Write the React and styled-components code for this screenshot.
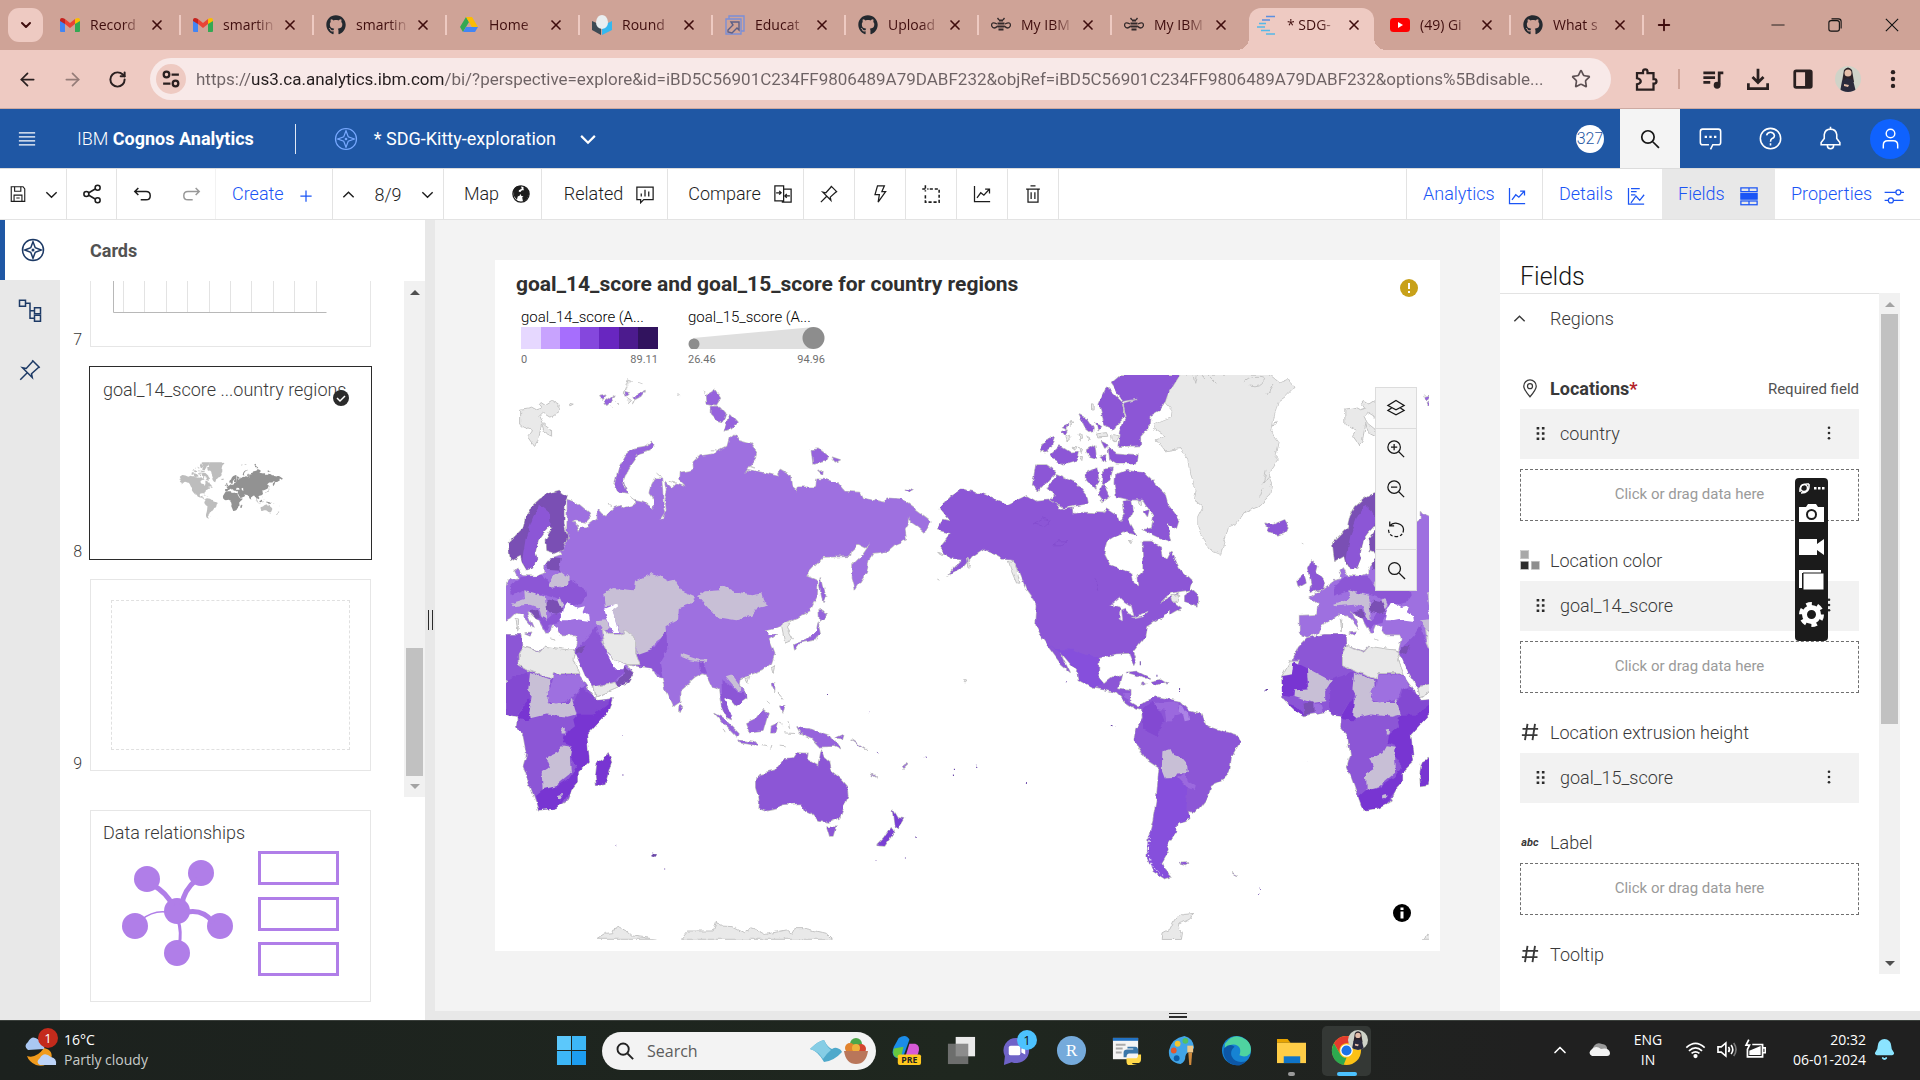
import React from 'react';
import styled, { createGlobalStyle, css } from 'styled-components';
import { FaGithub } from 'react-icons/fa';
import { ArrowLeft, ArrowRight, RotateCw, Star, Plus, X, Bell, ChevronDown, ChevronUp } from 'lucide-react';

const plex = "Roboto, 'Noto Sans', sans-serif";
const segoe = "'Open Sans', 'Noto Sans', sans-serif";

const GlobalStyle = createGlobalStyle`
  *, *::before, *::after { box-sizing: border-box; }
  body { margin: 0; font-family: ${plex}; color: #393939; background: #fff; }
  button, input { font: inherit; color: inherit; border: 0; padding: 0; background: none; }
  svg { display: block; flex: none; }
  h1, h2, h3, p { margin: 0; font-weight: 400; }
`;

/* ---------- shared pieces ---------- */
const Shell = styled.div`
  height: 100vh;
  display: flex;
  flex-direction: column;
  overflow: hidden;
`;
const Center = css`
  display: flex;
  align-items: center;
  justify-content: center;
`;
const Glyph = styled.svg.attrs((p) => ({ viewBox: p.viewBox || '0 0 32 32', 'aria-hidden': true }))`
  width: ${(p) => p.$size || 20}px;
  height: ${(p) => p.$size || 20}px;
  fill: none;
  stroke: currentColor;
  stroke-width: ${(p) => p.$w || 2};
`;

/* ---------- browser frame ---------- */
const TabStrip = styled.div`
  flex: none;
  height: 50px;
  display: flex;
  align-items: stretch;
  background: #cfa397;
  color: #3f0d0d;
  font-family: ${segoe};
`;
const TabSearch = styled.button`
  ${Center}
  width: 35px;
  height: 34px;
  margin: 8px 5px 8px 8px;
  border-radius: 11px;
  background: #eecac2;
`;
const Tab = styled.div`
  position: relative;
  flex: 0 1 133px;
  min-width: 0;
  display: flex;
  align-items: center;
  gap: 10px;
  padding: 0 16px 0 12px;
  &::after {
    content: '';
    position: absolute;
    right: 0;
    top: 15px;
    width: 2px;
    height: 20px;
    background: ${(p) => (p.$plain ? 'transparent' : '#eecac2')};
  }
  ${(p) =>
    p.$active &&
    css`
      &::before {
        content: '';
        position: absolute;
        inset: 8px 4px 0 4px;
        border-radius: 12px 12px 0 0;
        background: #eecac2;
      }
      &::after {
        top: auto;
        bottom: 0;
        left: -8px;
        right: -8px;
        width: auto;
        height: 12px;
        background:
          radial-gradient(circle at 0 0, transparent 12px, #eecac2 12px) left / 12px 12px no-repeat,
          radial-gradient(circle at 100% 0, transparent 12px, #eecac2 12px) right / 12px 12px no-repeat;
      }
    `}
  > * { position: relative; z-index: 1; }
`;
const TabTitle = styled.span`
  flex: 1;
  min-width: 0;
  overflow: hidden;
  white-space: nowrap;
  font-size: 14px;
  line-height: 20px;
  mask-image: linear-gradient(90deg, #000 60%, transparent 100%);
`;
const TabClose = styled.button`
  ${Center}
  width: 16px;
  height: 20px;
  margin-left: -5px;
`;
const NewTab = styled.button`
  ${Center}
  width: 40px;
`;
const WindowButtons = styled.div`
  margin-left: auto;
  display: flex;
  color: #111;
`;
const WindowButton = styled.button`
  ${Center}
  width: 57px;
`;
const AddressRow = styled.div`
  flex: none;
  height: 59px;
  display: flex;
  align-items: center;
  padding: 0 5px;
  background: #eecac2;
  border-bottom: 1px solid #cdaaa2;
  color: #2a2020;
`;
const NavButton = styled.button`
  ${Center}
  width: ${(p) => p.$w || 45}px;
  height: 42px;
  opacity: ${(p) => (p.$off ? 0.45 : 1)};
`;
const AddressBox = styled.label`
  flex: 1;
  min-width: 0;
  height: 42px;
  display: flex;
  align-items: center;
  gap: 10px;
  padding: 0 20px 0 6px;
  margin: 0 12px 0 10px;
  border-radius: 21px;
  background: #f8e9e8;
`;
const SiteInfo = styled.span`
  ${Center}
  width: 30px;
  height: 30px;
  border-radius: 50%;
  background: #eecac2;
`;
const Address = styled.input`
  flex: 1;
  min-width: 0;
  height: 30px;
  font-family: ${plex};
  font-size: 17px;
  color: transparent;
  background: linear-gradient(90deg, #6d6264 0 56px, #231c1d 56px 249px, #6d6264 249px);
  background-clip: text;
  -webkit-background-clip: text;
`;
const Rule = styled.span`
  width: 2px;
  height: 20px;
  margin: 0 10px;
  background: #cfa397;
`;
const Portrait = styled.span`
  width: 26px;
  height: 26px;
  border-radius: 50%;
  overflow: hidden;
`;

/* ---------- application header ---------- */
const Header = styled.header`
  flex: none;
  height: 59px;
  display: flex;
  align-items: center;
  background: #1f57a4;
  color: #fff;
  padding-left: 17px;
`;
const Brand = styled.h1`
  margin: 0 38px 0 40px;
  padding-right: 41px;
  border-right: 1px solid #dfe8f5;
  font-size: 18px;
  line-height: 30px;
  font-weight: 300;
  b { font-weight: 700; }
`;
const DocTitle = styled.span`
  margin: 0 22px 0 16px;
  font-size: 18px;
  line-height: 24px;
`;
const HeaderIcons = styled.div`
  margin-left: auto;
  align-self: stretch;
  display: flex;
`;
const HeaderButton = styled.button`
  ${Center}
  width: 60px;
  ${(p) => p.$light && 'background:#f4f4f4;color:#161616;'}
`;
const Count = styled.span`
  ${Center}
  width: 28px;
  height: 28px;
  border-radius: 50%;
  overflow: hidden;
  background: #fff;
  color: #1f57a4;
  font-size: 16px;
  font-weight: 300;
`;
const User = styled.span`
  ${Center}
  width: 40px;
  height: 40px;
  border-radius: 50%;
  background: #0f62fe;
`;

/* ---------- toolbar ---------- */
const Toolbar = styled.div`
  flex: none;
  height: 52px;
  display: flex;
  border-top: 1px solid #dcdcdc;
  border-bottom: 1px solid #e3e3e3;
  background: #fff;
  font-size: 18px;
`;
const Tool = styled.button`
  display: flex;
  align-items: center;
  justify-content: ${(p) => (p.$spread ? 'space-between' : 'center')};
  gap: 12px;
  width: ${(p) => p.$w}px;
  padding: ${(p) => (p.$spread ? '0 16px' : p.$label ? '0 0 0 10px' : '0')};
  border-right: ${(p) => (p.$open ? 0 : 1)}px solid #e3e3e3;
  color: ${(p) => (p.$blue ? '#1b55f5' : '#1d1d1d')};
  background: ${(p) => (p.$on ? '#e8e8e8' : 'transparent')};
  opacity: ${(p) => (p.$off ? 0.45 : 1)};
  line-height: 24px;
  font-weight: 300;
  svg { margin-top: ${(p) => (p.$blue ? 4 : 0)}px; }
`;
const Pager = styled.div`
  display: flex;
  align-items: center;
  justify-content: center;
  gap: 18px;
  width: 111px;
  border-right: 1px solid #e3e3e3;
  font-weight: 300;
  color: #1d1d1d;
`;
const Push = styled.div`
  margin-left: auto;
  display: flex;
  border-left: 1px solid #e3e3e3;
`;

/* ---------- workspace ---------- */
const Workspace = styled.div`
  flex: 1;
  min-height: 0;
  display: flex;
`;
const Rail = styled.nav`
  flex: none;
  width: 60px;
  background: #e8e8e8;
  color: #1d3a66;
`;
const RailButton = styled.button`
  ${Center}
  width: 60px;
  height: 60px;
  border-left: ${(p) => (p.$on ? 5 : 0)}px solid #1f57a4;
  background: ${(p) => (p.$on ? '#fff' : 'transparent')};
`;
const CardsPanel = styled.aside`
  flex: none;
  width: 365px;
  display: flex;
  flex-direction: column;
  background: #fff;
`;
const CardsTitle = styled.h2`
  padding: 19px 0 18px 30px;
  font-size: 18px;
  line-height: 24px;
  font-weight: 700;
  color: #525252;
`;
const CardsScroll = styled.div`
  flex: 1;
  min-height: 0;
  display: flex;
`;
const CardList = styled.div`
  flex: 1;
  display: flex;
  flex-direction: column;
  justify-content: flex-end;
  gap: 20px;
  overflow: hidden;
  padding-bottom: 26px;
`;
const CardRow = styled.div`
  flex: none;
  display: flex;
  align-items: flex-end;
  gap: 8px;
  height: 192px;
`;
const CardNumber = styled.span`
  width: 22px;
  text-align: right;
  font-size: 16px;
  line-height: 14px;
  font-weight: 300;
`;
const Card = styled.button`
  position: relative;
  display: flex;
  flex-direction: column;
  width: 281px;
  height: 192px;
  padding: ${(p) => p.$pad || '0'};
  border: 1px solid #e6e6e6;
  background: #fff;
  text-align: left;
  ${(p) => p.$on && 'outline:1px solid #2b2b2b;border-color:#fff;'}
`;
const CardName = styled.span`
  padding: 10px 12px 4px;
  font-size: 18px;
  line-height: 24px;
  font-weight: 300;
  white-space: nowrap;
`;
const Tick = styled.span`
  position: absolute;
  top: 22px;
  right: 21px;
`;
const Empty = styled.span`
  flex: 1;
  border: 1px dashed #e0e0e0;
`;
const Mini = styled.span`
  ${Center}
  flex: 1;
  padding-top: 16px;
`;
const RelationWrap = styled.div`
  flex: none;
  padding: 13px 0 18px 30px;
`;
const Track = styled.div`
  flex: none;
  width: 21px;
  display: flex;
  flex-direction: column;
  align-items: center;
  padding: 0 2px;
  background: #f1f1f1;
`;
const Arrow = styled.span`
  ${Center}
  width: 17px;
  height: 21px;
  &::before {
    content: '';
    border: 5px solid transparent;
    ${(p) => (p.$down ? 'border-top-color' : 'border-bottom-color')}: ${(p) => (p.$dim ? '#a3a3a3' : '#505050')};
    margin: ${(p) => (p.$down ? '5px 0 0' : '0 0 4px')};
  }
`;
const Rest = styled.span`
  flex: ${(p) => p.$n} 1 0;
  align-self: stretch;
  background: ${(p) => (p.$thumb ? '#c1c1c1' : 'transparent')};
`;
const Splitter = styled.div`
  ${Center}
  flex: none;
  width: 10px;
  background: #e8e8e8;
  &::before {
    content: '';
    width: 5px;
    height: 20px;
    border: solid #2b2b2b;
    border-width: 0 1px;
  }
`;
const Stage = styled.div`
  flex: 1;
  min-width: 0;
  display: flex;
  flex-direction: column;
`;
const Columns = styled.div`
  flex: 1;
  min-height: 0;
  display: flex;
`;
const BottomBar = styled.div`
  flex: none;
  height: 9px;
  ${Center}
  background: #e8e8e8;
  &::before {
    content: '';
    width: 18px;
    height: 5px;
    border: solid #2b2b2b;
    border-width: 1px 0 2px;
  }
`;
const Canvas = styled.main`
  flex: 1;
  min-width: 0;
  display: flex;
  padding: 40px 60px 60px;
  background: #f3f3f3;
`;
const Viz = styled.section`
  position: relative;
  flex: 1;
  min-width: 0;
  display: flex;
  flex-direction: column;
  padding: 11px 11px 11px;
  background: #fff;
`;
const VizHead = styled.div`
  display: flex;
  align-items: flex-end;
  justify-content: space-between;
  padding: 0 11px 0 10px;
`;
const VizTitle = styled.h2`
  font-size: 21px;
  line-height: 26px;
  font-weight: 700;
  color: #2f2f2f;
`;
const Legends = styled.div`
  display: flex;
  gap: 30px;
  padding: 11px 15px 8px;
`;
const Legend = styled.div`
  width: 137px;
  display: flex;
  flex-direction: column;
`;
const LegendName = styled.span`
  font-size: 15px;
  line-height: 19px;
  font-weight: 300;
  color: #000;
`;
const Ramp = styled.div`
  height: 22px;
  display: grid;
  grid-template-columns: repeat(7, 1fr);
`;
const Swatch = styled.span`
  background: ${(p) => p.$c};
`;
const Ends = styled.div`
  display: flex;
  justify-content: space-between;
  padding-top: 4px;
  font-size: 11px;
  line-height: 14px;
  color: #6f6f6f;
`;
const WorldMap = styled.svg`
  flex: 1 1 0;
  min-height: 0;
  width: 100%;
`;
const MapTools = styled.div`
  position: absolute;
  top: 127px;
  right: 23px;
  width: 42px;
  border: 1px solid #dcdcdc;
  background: #f4f4f4;
`;
const MapTool = styled.button`
  ${Center}
  box-sizing: content-box;
  width: 40px;
  height: 40px;
  color: #161616;
  border-bottom: ${(p) => (p.$line ? 1 : 0)}px solid #dcdcdc;
`;
const InfoButton = styled.button`
  position: absolute;
  right: 29px;
  bottom: 29px;
`;

/* ---------- fields panel ---------- */
const FieldsPanel = styled.aside`
  flex: none;
  width: 420px;
  display: flex;
  flex-direction: column;
  padding: 0 20px 37px 0;
  background: #fff;
`;
const PanelTitle = styled.h2`
  padding: 41px 0 0 20px;
  font-size: 25px;
  line-height: 32px;
  font-weight: 300;
  color: #161616;
`;
const PanelScroll = styled.div`
  flex: 1;
  min-height: 0;
  display: flex;
`;
const PanelBody = styled.div`
  flex: 1;
  min-width: 0;
  overflow: hidden;
  padding: 0 20px;
  border-top: 1px solid #e3e3e3;
  font-size: 18px;
  font-weight: 300;
`;
const Region = styled.button`
  display: flex;
  align-items: center;
  gap: 23px;
  height: 50px;
  margin: 0 0 25px -8px;
  padding-bottom: 2px;
`;
const Slot = styled.section`
  display: flex;
  flex-direction: column;
  gap: 10px;
  margin-bottom: 20px;
`;
const SlotHead = styled.h3`
  display: flex;
  align-items: center;
  gap: 10px;
  height: 40px;
  margin-bottom: -10px;
  padding-bottom: 2px;
  font-size: 18px;
  font-weight: ${(p) => (p.$bold ? 700 : 300)};
  em { font-style: normal; color: #b4232a; }
  small { margin-left: auto; padding-top: 2px; font-size: 15px; font-weight: 400; color: #525252; }
`;
const SlotIcon = styled.span`
  ${Center}
  width: 20px;
`;
const Abc = styled.span`
  font: italic 700 11px ${plex};
`;
const Field = styled.div`
  display: flex;
  align-items: center;
  gap: 12px;
  height: 50px;
  padding: 0 23px 2px 14px;
  background: #f2f2f2;
  button { margin-left: auto; }
`;
const Drop = styled.button`
  width: 100%;
  height: 52px;
  padding-bottom: 2px;
  border: 1px dashed #6f6f6f;
  font-size: 15px;
  font-weight: 400;
  color: #9a9a9a;
`;

/* ---------- screen capture palette ---------- */
const Palette = styled.div`
  position: absolute;
  top: 478px;
  right: 92px;
  z-index: 3;
  width: 33px;
  height: 163px;
  border-radius: 4px;
  background: #1b1b1b;
  color: #fff;
`;

/* ---------- taskbar ---------- */
const Taskbar = styled.footer`
  flex: none;
  height: 60px;
  display: grid;
  grid-template-columns: 1fr auto 1fr;
  align-items: center;
  border-top: 1px solid #3a3f3b;
  background: linear-gradient(90deg, #1c211e, #1f271f 50%, #202020 80%);
  color: #fff;
  font-family: ${segoe};
  font-size: 14px;
  line-height: 20px;
`;
const Weather = styled.div`
  display: flex;
  align-items: center;
  gap: 6px;
  padding: 0 0 2px 24px;
  p + p { color: #c8cbc9; }
`;
const Dock = styled.div`
  display: flex;
  align-items: center;
  gap: 6px;
  padding-right: 2px;
`;
const DockButton = styled.button`
  ${Center}
  position: relative;
  width: 49px;
  height: 50px;
  border-radius: 5px;
  background: ${(p) => (p.$on ? '#343835' : 'transparent')};
  &::after {
    content: '';
    position: absolute;
    bottom: 0;
    width: ${(p) => p.$bar || 0}px;
    height: 4px;
    border-radius: 2px;
    background: ${(p) => (p.$on ? '#4cc2ff' : '#9a9a9a')};
  }
`;
const DockSearch = styled.label`
  display: flex;
  align-items: center;
  gap: 12px;
  width: 274px;
  height: 38px;
  padding: 0 6px 0 13px;
  border-radius: 19px;
  background: #f3f3f3;
  color: #222;
  input { flex: 1; min-width: 0; font-size: 16px; }
  input::placeholder { color: #5c5c5c; opacity: 1; }
`;
const Tray = styled.div`
  justify-self: end;
  display: flex;
  align-items: center;
  padding: 0 24px 2px 0;
`;
const TrayItem = styled.span`
  ${Center}
  width: ${(p) => p.$w}px;
  text-align: center;
`;
const Clock = styled.time`
  width: 92px;
  text-align: right;
  margin-right: 7px;
  white-space: nowrap;
`;

/* ---------- drawings: browser ---------- */
const Gmail = () => (
  <Glyph viewBox="0 0 20 20" $size={20}>
    <g stroke="none">
      <path fill="#4285f4" d="M0 5v11q0 1 1 1h4V8z" />
      <path fill="#34a853" d="M15 17h4q1 0 1-1V5l-5 3z" />
      <path fill="#fbbc04" d="M15 4v5l5-3V4.500q-1-2.500-5-.5z" />
      <path fill="#c5221f" d="M5 4v5L0 6V4.500Q1 2 5 4z" />
      <path fill="#ea4335" d="M5 4l5 4 5-4v5l-5 4-5-4z" />
    </g>
  </Glyph>
);
const Drive = () => (
  <Glyph viewBox="0 0 20 20" $size={20}>
    <g stroke="none">
      <path fill="#34a853" d="M7 2l3 5-6 10-3-5z" />
      <path fill="#fbbc04" d="M7 2h6l6 10h-6z" />
      <path fill="#4285f4" d="M4 17l3-5h12l-3 5z" />
    </g>
  </Glyph>
);
const Round = () => (
  <Glyph viewBox="0 0 20 20" $size={20}>
    <g stroke="none">
      <path fill="#3d4a54" d="M0 6l9 4v10l-9-5z" />
      <path fill="#35b8ef" d="M20 6l-10 5v9l10-5z" />
      <path fill="#e9eef0" d="M10 0q5 0 6 7 0 6-6 7-6-1-6-7 1-7 6-7z" />
    </g>
  </Glyph>
);
const Edu = () => (
  <Glyph viewBox="0 0 20 20" $size={20} $w={1.4}>
    <path stroke="#7b8fd8" d="M4 4V1h15v15h-3M1 19h15V4H1z" />
    <path stroke="#5c5f86" d="M6 7h8v8l-2-2-5 5-4-1v-2l5-5z" />
  </Glyph>
);
const Bee = () => (
  <Glyph viewBox="0 0 20 20" $size={20} $w={1.3}>
    <g stroke="#33292a">
      <path d="M6 9Q0 6 0.700 11q2 4 6 0M14 9q6-3 5.300 2-2 4-6 0M8 5L6.500 3M12 5l1.500-2" />
      <path strokeWidth="2" d="M8 5.500h4M6.500 8.500h7M6.500 11.500h7M7.500 14.500h5" />
    </g>
  </Glyph>
);
const Cognos = () => (
  <Glyph viewBox="0 0 20 20" $size={20} $w={1.6}>
    <path stroke="#5b8fe0" d="M9 1.500h9M5 5h8" />
    <path stroke="#55b8e8" d="M2 8.500h7M0 12h8M4 15.500h9M9 19h9" />
  </Glyph>
);
const YouTube = () => (
  <Glyph viewBox="0 0 20 20" $size={20}>
    <rect x="0" y="3" width="20" height="14" rx="3.500" fill="#f00" stroke="none" />
    <path d="M8 7l5 3-5 3z" fill="#fff" stroke="none" />
  </Glyph>
);
const Hub = () => <FaGithub size={20} color="#24292f" />;
const Face = () => (
  <Glyph viewBox="0 0 26 26" $size={26}>
    <g stroke="none">
      <rect width="26" height="26" fill="#cfd3c8" />
      <path fill="#2b2227" d="M9 4q4-5 8 0l2 12H7z" />
      <circle cx="13" cy="7" r="3.500" fill="#e5bfa9" />
      <path fill="#2a2a3c" d="M5 26l2-11 5-3 6 2 3 12z" />
      <path fill="#e5bfa9" d="M9 18l5 1-1 2-4-1z" />
    </g>
  </Glyph>
);

const tabs = [
  [Gmail, 'Record'],
  [Gmail, 'smartin'],
  [Hub, 'smartin'],
  [Drive, 'Home'],
  [Round, 'Round'],
  [Edu, 'Educat'],
  [Hub, 'Upload'],
  [Bee, 'My IBM'],
  [Bee, 'My IBM', 'plain'],
  [Cognos, '* SDG-', 'active'],
  [YouTube, '(49) Gi'],
  [Hub, 'What s'],
];

/* ---------- drawings: application ---------- */
const ICONS = {
  explore: <><circle cx="16" cy="16" r="14" /><path d="M16 5l3 8 8 3-8 3-3 8-3-8-8-3 8-3z" /><circle cx="16" cy="16" r="1" /></>,
  save: <><path d="M4 3h21l3 4v22H4z" /><path d="M10 3v8h11V3M9 29V18h14v11M13 23h6" /></>,
  share: <><circle cx="25" cy="6" r="4" /><circle cx="7" cy="16" r="4" /><circle cx="25" cy="26" r="4" /><path d="M11 14l10-6M11 18l10 6" /></>,
  undo: <path d="M9 5l-6 6 6 6M3 11h19q7 0 7 7t-7 7h-9" />,
  redo: <path d="M23 5l6 6-6 6M29 11H10q-7 0-7 7t7 7h8" />,
  plus: <path d="M16 7v18M7 16h18" />,
  globe: <><circle cx="16" cy="16" r="13" /><path fill="currentColor" d="M5 9q4-6 10-5l1 3-4 2-1 3 3 2-1 4-3 1-1 4-4-5zM21 5q7 4 7 11l-3 7-5 4-1-5 2-3-4-1-2-4 3-3 4 0-1-3z" /></>,
  related: <><path d="M3 5h26v20H14l-5 5v-5H3z" /><path d="M10 20v-5M16 20V9M22 20v-8" /></>,
  compare: <><path d="M3 3h14v24H3zM17 8h12v21H15v-2" /><path d="M5 14h8M10 11l3 3-3 3M27 19h-8M22 16l-3 3 3 3" /></>,
  pin: <path d="M19 3l10 10M20 4l-9 10-5-1 13 13-1-5 10-9M12 20L3 29" />,
  bolt: <path d="M12 3h11l-4 9h6L13 29l2-12H8z" />,
  crop: <path strokeWidth="2.500" strokeDasharray="5 3" d="M14 8h15v21H7V16M7 2v10M2 8h10" />,
  chart: <path d="M4 3v25h25M8 22l6-8 5 4 9-10M21 8h7v7" />,
  trash: <path d="M5 8h22M8 8v21h16V8M12 3h8M13 13v11M19 13v11" />,
  details: <path d="M4 3v26h25M8 4h14M8 9h9M8 14h7M8 27l8-11 6 7 7-9" />,
  fields: <><rect x="3" y="3" width="26" height="6" /><rect x="3" y="12" width="26" height="9" fill="currentColor" /><rect x="3" y="24" width="26" height="6" /><path d="M16 3v6M16 24v6" /></>,
  props: <><path d="M1 10h18M27 10h5M1 23h6M15 23h16" /><circle cx="23" cy="10" r="4" /><circle cx="11" cy="23" r="4" /></>,
  search: <><circle cx="13" cy="13" r="9" /><path d="M20 20l9 9" /></>,
  zoomIn: <><circle cx="13" cy="13" r="10" /><path d="M20 20l9 9M8 13h10M13 8v10" /></>,
  zoomOut: <><circle cx="13" cy="13" r="10" /><path d="M20 20l9 9M8 13h10" /></>,
  layers: <><path d="M16 4l13 8-13 7-13-7z" /><path d="M9 16l-6 4 13 7 13-7-6-4" /></>,
  reset: <><path d="M6 4v7h7M6 11q5-6 12-4 9 2 10 9" /><path strokeDasharray="5 3" d="M28 16q0 12-12 12T4 16" /></>,
  chat: <><path d="M16 30l3-6h7q3 0 3-3V7q0-3-3-3H6Q3 4 3 7v14q0 3 3 3h8" /><path strokeWidth="3" strokeDasharray="3 3" d="M8.500 14h15" /></>,
  help: <><circle cx="16" cy="16" r="13" /><path d="M11 12q1-4 5-4t5 4q0 3-3 4-2 1-2 4M16 22v3" /></>,
  bell: <path d="M4 24v-3l4-5v-5q1-7 8-7t8 7v5l4 5v3zM16 1v3M12 25q0 4 4 4t4-4" />,
  user: <><circle cx="16" cy="9" r="6" /><path d="M6 30v-5q0-6 6-6h8q6 0 6 6v5" /></>,
  tree: <><rect x="2" y="3" width="8" height="8" /><rect x="22" y="13" width="8" height="8" /><rect x="22" y="23" width="8" height="8" /><path d="M10 7h6v20h6M16 17h6" /></>,
  up: <path d="M5 22l11-11 11 11" />,
  down: <path d="M5 11l11 11 11-11" />,
  place: <><path d="M16 30q-10-12-10-17a10 10 0 0 1 20 0q0 5-10 17z" /><circle cx="16" cy="13" r="4" /></>,
  hash: <path strokeWidth="3" d="M12 3L8 29M24 3l-4 26M4 11h25M3 21h25" />,
  swatches: <g stroke="#c6c6c6" strokeWidth="1"><rect x="1" y="1" width="13" height="13" fill="#a8a8a8" /><rect x="1" y="18" width="13" height="13" fill="#2b2b2b" /><rect x="18" y="18" width="13" height="13" fill="#8d8d8d" /></g>,
};
const Icon = ({ name, size, w }) => <Glyph $size={size} $w={w}>{ICONS[name]}</Glyph>;

/* ---------- drawings: world map, in thirds of a pixel ---------- */
const LAND = {
  eurasia:
    'M232 750L262 760 298 790 302 805 290 817 248 812 262 830 268 850 275 835 292 835 295 825 322 805 322 780 335 795 345 800 370 775 392 768 400 775 435 765 435 750 460 755 490 778 492 750 478 730 482 710 495 685 515 685 518 720 520 770 526 790 512 810 522 808 530 780 524 745 530 720 525 695 545 715 560 700 590 710 570 690 572 668 612 660 610 640 632 618 670 612 715 590 722 565 738 552 745 572 785 583 800 605 797 625 762 673 780 660 835 672 865 680 875 662 905 680 908 710 918 728 925 712 978 712 982 688 1010 690 1045 700 1065 725 1110 728 1118 745 1188 758 1192 745 1235 748 1325 815 1305 848 1285 830 1258 812 1255 800 1255 825 1246 840 1250 870 1215 885 1192 905 1150 910 1140 925 1130 965 1097 1018 1088 985 1090 945 1120 915 1145 878 1125 895 1105 885 1085 905 1082 920 1000 922 950 975 985 990 982 1040 960 1085 905 1112 875 1125 850 1135 828 1140 840 1155 860 1155 840 1170 855 1210 845 1240 820 1260 770 1278 750 1290 748 1305 765 1320 768 1348 740 1368 725 1350 705 1340 702 1355 715 1385 728 1410 712 1402 698 1370 690 1320 680 1315 668 1312 650 1275 640 1272 615 1285 570 1325 570 1355 548 1370 525 1320 518 1285 505 1282 485 1255 445 1250 410 1245 405 1240 430 1270 415 1295 385 1312 318 1342 312 1315 285 1275 258 1210 255 1200 262 1168 258 1158 215 1158 202 1140 185 1125 175 1150 168 1150 148 1115 110 1080 133 1135 98 1095 78 1090 63 1105 23 1125 13 1150 -22 1162 -44 1150 -44 1098 8 1095 11 1065 -12 1045 53 1000 60 990 85 985 75 965 85 955 95 978 140 980 165 970 165 950 185 925 215 915 208 905 230 880 232 800Z',
  scandinavia: 'M55 880L80 855 100 835 108 800 125 770 150 748 180 730 208 722 232 740 222 765 222 820 232 865 218 900 190 912 168 905 166 870 188 835 180 828 160 850 145 870 135 910 140 925 128 955 110 960 98 940 92 918 62 935Z',
  africa:
    'M-22 1165L30 1155 93 1155 95 1190 150 1205 165 1190 200 1202 245 1202 256 1205 250 1228 275 1290 310 1340 322 1353 370 1347 360 1380 325 1415 290 1455 298 1535 262 1570 262 1600 245 1620 230 1655 215 1665 190 1677 147 1682 125 1620 100 1550 110 1515 100 1460 80 1435 82 1400 55 1397 43 1385 -32 1398 -60 1380 -94 1345 -97 1280 -67 1232 -47 1190Z',
  madagascar: 'M355 1510L365 1535 345 1605 320 1608 317 1580 322 1540 340 1530Z',
  britain: 'M-7 930L8 950 4 965 31 1000 26 1018 -12 1028 -8 1010 -12 990 -20 955ZM-52 995L-32 975 -24 1000 -47 1013Z',
  islands:
    'M373 710L385 660 410 615 435 595 465 590 485 575 492 585 480 600 445 610 415 655 400 695 412 730 385 725ZM650 435L675 420 692 445 680 465 652 460ZM665 470L690 470 708 490 700 515 680 510 665 495ZM720 495L742 520 725 537 703 543ZM965 600L985 598 1015 620 1010 630 970 640ZM1028 622L1052 630 1040 636ZM985 665L1000 662 998 675ZM1250 718L1270 722 1260 727ZM330 440L348 436 338 450ZM340 458L372 435 360 455 348 466ZM430 440L466 425 455 440 436 450ZM405 425L420 430 410 438ZM995 985L1008 1040 1000 1055 990 1010ZM988 1080L1015 1095 990 1115ZM985 1120L992 1150 980 1170 930 1180 915 1202 912 1185 955 1170 980 1145ZM676 1392L700 1405 745 1450 740 1462 700 1420ZM748 1472L800 1480 802 1487 750 1480ZM768 1420L800 1405 820 1380 835 1392 820 1445 780 1450ZM845 1430L866 1420 858 1450 843 1450ZM922 1435L960 1438 1025 1460 1050 1500 1030 1490 990 1492 965 1465 930 1450ZM845 1305L855 1300 855 1325ZM870 1370L885 1368 880 1390ZM568 1365L578 1375 574 1385 567 1380ZM1040 1465L1062 1455 1058 1468ZM1085 1470L1130 1500 1108 1488ZM1145 1570L1163 1585 1152 1578ZM1236 1550L1255 1542 1240 1556ZM105 1150L125 1148 120 1156Z',
  australia:
    'M798 1585L815 1575 855 1565 885 1528 910 1525 920 1510 955 1512 952 1530 985 1550 995 1502 1003 1525 1020 1540 1025 1565 1055 1590 1072 1610 1075 1640 1050 1705 1020 1718 985 1712 965 1690 948 1682 935 1662 875 1665 860 1678 825 1685 808 1678 810 1655 798 1615ZM1012 1733L1038 1733 1030 1760 1020 1760Z',
  zealand: 'M1208 1682L1222 1705 1245 1708 1225 1740 1215 1735ZM1205 1735L1212 1750 1185 1790 1162 1788 1185 1765Z',
  america:
    'M95 388L165 405 232 435 290 408 320 425 370 420 390 450 430 445 432 462 465 458 520 460 530 445 560 465 570 490 585 460 580 425 605 420 610 450 595 480 620 525 580 515 530 545 522 580 540 615 605 640 612 670 628 680 625 650 640 635 638 545 665 545 695 565 700 590 712 600 725 575 750 630 788 665 780 690 720 700 690 730 745 700 735 730 755 745 720 765 720 752 690 775 650 800 645 830 610 875 620 905 615 917 600 880 560 882 508 895 505 945 525 970 545 955 575 945 565 985 600 990 600 1025 625 1040 655 1022 680 1012 750 1025 780 1055 815 1062 830 1098 880 1115 920 1125 932 1145 905 1190 900 1230 885 1258 845 1275 835 1310 800 1355 775 1352 780 1380 745 1392 740 1415 712 1455 718 1470 695 1510 700 1525 725 1552 705 1558 670 1535 652 1490 655 1440 670 1380 680 1320 688 1225 650 1200 613 1140 618 1105 638 1075 635 1048 615 1045 585 1025 560 1000 525 990 490 985 448 962 445 940 388 872 418 935 395 915 340 840 318 795 322 735 290 690 270 640 245 600 225 598 195 582 155 568 130 585 100 620 55 645 95 600 62 595 30 560 62 520 20 510 38 482 62 487 28 445 60 410Z',
  arctic:
    'M380 345L440 370 470 405 475 430 400 445 360 420 375 405 355 385ZM318 315L350 315 378 335 345 370 325 392 308 375ZM555 345L590 332 640 338 705 400 715 435 748 480 740 505 712 488 725 545 695 535 640 510 665 505 672 470 640 420 600 420 560 410 553 370ZM542 70L570 45 748 45 735 90 690 150 660 168 658 200 632 230 632 260 565 262 570 210 590 170 578 122ZM530 82L575 125 585 170 550 207 525 195 508 130ZM535 262L560 280 625 285 620 312 560 312 540 300ZM515 245L535 255 525 265ZM448 165L470 175 490 205 488 218 465 200ZM498 190L515 200 505 212ZM330 272L350 240 373 230 365 260 345 275ZM362 285L390 258 425 280 445 278 440 300 400 312 370 298ZM470 270L495 255 500 298 480 292ZM470 340L500 325 508 360 495 390 470 360ZM520 325L550 322 540 360 515 375ZM520 375L540 410 520 425 505 405ZM398 200L418 190 410 205ZM395 215L415 208 405 228ZM510 290L528 285 525 305ZM640 455L655 450 650 470ZM765 705L785 690 805 708 805 738 765 725Z',
  iceland: 'M1003 490L1030 495 1065 480 1078 502 1070 515 1045 525 1015 518 1020 505Z',
  antilles: 'M590 938L620 935 660 955 640 955 615 945ZM665 965L690 960 702 968 680 975ZM635 970L648 972 640 976ZM708 968L720 970 712 973ZM750 1512L774 1510 768 1518ZM908 1540L925 1548 915 1545Z',
  greenland:
    'M752 45L1020 45 1050 70 1075 60 1092 82 1065 110 1045 125 1030 180 1025 220 1045 245 1035 290 1045 300 1015 345 1025 370 1020 405 985 440 945 455 920 490 895 500 885 540 872 583 845 572 820 535 805 500 805 470 820 440 795 420 800 390 785 350 778 300 750 265 705 272 680 240 710 230 672 205 675 190 725 170 728 150 708 125 715 105Z',
};

const OldWorld = () => (
  <g id="old-world">
    <g stroke="#c0c0c0" strokeWidth="4" strokeLinejoin="round" paintOrder="stroke">
      <path fill="#9e6fe0" d={LAND.eurasia} />
      <path fill="#7a4fb4" d={LAND.scandinavia} />
      <path fill="#8c57d6" d={LAND.africa} />
      <path fill="#7836d2" d={LAND.madagascar} />
      <path fill="#8c57d6" d={LAND.britain} />
      <path fill="#9664dc" d={LAND.islands} />
      <path fill="#8c57d6" d={LAND.australia} />
      <path fill="#7a3fd4" d={LAND.zealand} />
    </g>
    <g fill="#e9e9e9" stroke="#c4c4c4" strokeWidth="3">
      <path d="M92 478L112 475 125 472 140 480 155 475 145 462 150 455 165 465 185 452 208 465 205 485 180 502 160 490 150 500 160 520 185 540 185 562 165 552 155 520 145 570 134 587 115 560 125 545 108 535 92 520Z" />
      <path d="M875 1125L910 1108 890 1135 908 1168 885 1178 880 1150ZM845 1255L855 1248 850 1272ZM768 1285L780 1280 774 1300ZM78 1110L86 1108 84 1145ZM180 1168L196 1172M236 460L250 463 240 468Z" />
      <path d="M400 430L415 390 428 395M410 445L425 455 412 468M440 440L430 468M380 455L390 465M360 465L372 472M445 398L458 402M560 433L568 440M640 420L648 428M500 670L512 680M540 695L560 700M355 760L362 772M420 740L435 752M660 600L680 600M780 650L795 655" />
      <path d="M810 1488L835 1492M850 1485L845 1500M870 1490L888 1492M885 1450L915 1452M865 1330L880 1350M895 1415L900 1435M870 1418L878 1425M700 1435L706 1448M830 1355L840 1365" />
      <path d="M322 2070L350 2052 366 2050 368 2040 392 2034 412 2045 428 2060 500 2070ZM575 2070L595 2045 670 2045 680 2018 690 2030 730 2032 765 2050 785 2035 800 2040 828 2055 890 2042 905 2055 915 2038 950 2038 1010 2052 1028 2070Z" />
    </g>
    <path fill="#8c57d6" d="M150 765L180 790 182 825 160 850 145 870 135 905 140 925 128 955 110 960 97 930 108 860 130 800Z" />
    <path fill="#8c57d6" d="M60 1010L90 982 160 978 180 1005 215 1015 240 990 285 1020 290 1040 275 1062 225 1072 215 1050 165 1035 100 1025 62 1038ZM130 1085L170 1110 190 1092 215 1090 205 1120 178 1125 168 1145 150 1115Z" />
    <path fill="#7a4fb4" d="M160 1070L178 1050 203 1055 217 1085 200 1092 175 1087ZM170 945L185 922 212 925 208 960 175 958ZM120 1085L145 1080 150 1105 138 1108Z" />
    <path fill="#c8bfd6" d="M178 1002L190 980 212 963 236 982 235 1008 185 1014ZM60 1062L105 1048 103 1022 165 1038 170 1110 155 1102 148 1075 120 1065 65 1070ZM202 1050L212 1046 220 1065 212 1075ZM318 1115L350 1112 360 1135 340 1140Z" />
    <path fill="#c8bfd6" d="M340 1030L370 1015 432 1022 435 995 490 970 535 995 555 990 572 1020 615 1040 605 1062 570 1075 568 1108 527 1130 530 1155 500 1175 490 1200 460 1215 440 1215 437 1165 410 1145 390 1150 375 1110 365 1085 380 1065 345 1070Z" />
    <path fill="#c8bfd6" d="M625 1040L645 1025 690 1022 700 1008 735 1027 785 1037 815 1032 820 1052 838 1065 805 1072 785 1098 740 1112 680 1102 655 1075ZM570 1212L625 1230 650 1230 648 1240 600 1232 570 1220ZM708 1280L725 1275 755 1315 748 1328Z" />
    <path fill="#8c57d6" d="M440 1215L495 1195 530 1140 532 1200 510 1238 518 1285 485 1255 445 1250ZM628 1235L640 1235 652 1272 630 1268ZM695 1290L715 1300 745 1330 768 1330 768 1348 740 1368 725 1350 702 1345 728 1408 712 1402 698 1370Z" />
    <path fill="#8c57d6" d="M262 1195L298 1160 320 1125 330 1165 352 1215 372 1255 402 1245 405 1260 375 1300 312 1312 285 1275 258 1215Z" />
    <path fill="#7a4fb4" d="M403 1250L430 1270 415 1295 383 1312 378 1297 400 1282ZM262 1195L288 1188 275 1212 260 1212Z" />
    <g fill="#e9e9e9" stroke="#c4c4c4" strokeWidth="3">
      <path d="M335 1135L360 1155 390 1155 410 1145 437 1165 437 1210 450 1245 410 1245 375 1232 350 1205 340 1180Z" />
      <path d="M312 1312L375 1298 382 1315 318 1342Z" />
      <path d="M85 1210L97 1190 150 1208 165 1190 245 1202 258 1208 252 1228 270 1272 190 1272 188 1288 120 1265 85 1245ZM-97 1280L-72 1232 -42 1232 -67 1275Z" />
    </g>
    <path fill="#fff" d="M230 1060L218 1080 212 1112 235 1112 255 1108 300 1114 298 1100 278 1088 285 1070 262 1075 245 1065ZM343 1078L382 1062 385 1070 365 1085 375 1110 388 1150 370 1150 355 1120ZM350 1210L375 1232 405 1245 400 1256 374 1256ZM205 1130L190 1132 184 1150 200 1155Z" />
    <path fill="#8349d2" d="M48 1290L115 1268 125 1330 115 1345 80 1400 48 1395ZM272 1312L310 1340 322 1353 365 1352 355 1370 310 1395 262 1395 250 1360Z" />
    <path fill="#7836d2" d="M250 1410L262 1395 310 1395 368 1350 360 1380 290 1455 298 1535 262 1570 262 1600 245 1620 240 1585 262 1550 240 1520 245 1490 220 1480 225 1455 255 1430ZM80 1405L118 1340 125 1405 118 1412 88 1410ZM155 1622L200 1610 240 1585 245 1620 215 1665 190 1677 147 1682 135 1640ZM-97 1280L-67 1275 -62 1235 -22 1255 -20 1320 -62 1325 -62 1340 -97 1335ZM-80 1362L-55 1370 -30 1396 -45 1392Z" />
    <path fill="#c8bfd6" d="M120 1270L180 1290 182 1315 170 1340 180 1360 240 1360 245 1345 260 1395 235 1402 170 1395 130 1405 117 1395 125 1340 115 1320ZM168 1525L205 1508 215 1490 245 1495 240 1525 243 1570 195 1610 158 1620 155 1570 180 1555ZM-22 1255L53 1295 33 1325 33 1355 -2 1360 -62 1342 -60 1322 -17 1320ZM218 1440L228 1438 226 1455 218 1455Z" />
    <path fill="#9e6fe0" d="M190 1275L270 1275 285 1310 265 1320 245 1350 200 1362 175 1355 170 1325 185 1310ZM-2 1365L20 1360 25 1385 0 1393Z" />
    <path fill="#7a4fb4" d="M-35 1362L0 1358 2 1390 -32 1396Z" />
    <path fill="#c8bfd6" d="M205 1637l10-3 3 8-8 8-6-4z" />
    <path fill="#6b47a8" d="M488 1812l14 3-6 8-8-2zM1277 1761h5v4h-5zM397 1458h3v3h-3zM397 1575h4v3h-4zM1012 1333h3v3h-3zM1138 1390h3v3h-3zM1165 1505h3v3h-3zM1306 1522h3v3h-3zM1393 1558h3v3h-3zM1393 1575h3v3h-3zM1462 1549h3v3h-3zM376 1788h3v3h-3zM523 1857h3v3h-3zM1158 1830h3v3h-3zM1246 1821h3v3h-3z" />
  </g>
);

const NewWorld = () => (
  <g>
    <g stroke="#c0c0c0" strokeWidth="4" strokeLinejoin="round" paintOrder="stroke">
      <path fill="#8c57d6" d={LAND.america} />
      <path fill="#8c57d6" d={LAND.arctic} />
      <path fill="#8c57d6" d={LAND.iceland} />
      <path fill="#8c57d6" d={LAND.antilles} />
      <path fill="#e9e9e9" d={LAND.greenland} />
    </g>
    <path fill="none" stroke="#c4c4c4" strokeWidth="3" d="M790 45l5 25 5-25M815 45l10 15M835 45l25 25M945 65q25-20 60-10-10 30-45 20M1030 75l-18 30M1040 180l-10 20M1010 330l-10 40 15-20M1000 385l-10 25" />
    <g fill="#e9e9e9" stroke="#c4c4c4" strokeWidth="3">
      <path d="M485 135h8v12h-8zM420 182l12 8-8 6zM405 232l14-6 2 14-12 4zM445 222l8 0 2 16-8 2zM500 222l30-4 4 14-30 2zM470 228l10 6-4 8zM448 262l10 6-4 10zM430 262l12 2-6 8zM545 222l20 6-6 18-12-6zM448 290l10 0-2 12zM620 420l14 4-4 14zM595 542l12 2-4 8zM235 605l20 5 15 60-10 0-15-35zM110 595l12 20-8 8zM20 575l24 4-6 6zM50 650l14-6M22 658l8 4M1118 548l6 4M720 708l30-4-6 20-16 4zM98 960l8 0 2 6-8 0z" />
      <path d="M697 1740L700 1720 720 1710 735 1680 760 1665 795 1662 775 1680 755 1690 745 1695 758 1720 755 1740Z" />
    </g>
    <path fill="#fff" stroke="#c4c4c4" strokeWidth="2" d="M542 735L570 712 588 730 605 740 612 768 600 765 590 745 575 750 578 780 568 775 572 742ZM605 775L655 755 640 768ZM578 125L622 118 580 130 585 160Z" />
    <path fill="#8650dc" d="M688 1230L695 1225 710 1258 745 1255 775 1290 770 1350 780 1380 745 1392 740 1415 712 1455 718 1470 695 1510 700 1525 722 1552 705 1556 670 1535 652 1490 658 1440 672 1380 682 1320ZM350 850L380 868 430 870 470 885 505 890 505 945 525 970 490 985 448 962 445 940 400 885Z" />
    <path fill="#8349d2" d="M640 1075L640 1045 670 1025 690 1050 705 1085 680 1130 640 1110Z" />
    <path fill="#9b69de" d="M672 1030L745 1025 752 1060 735 1065 730 1085 710 1085 705 1050 680 1045ZM745 1255L765 1240 775 1265 798 1280 795 1292 775 1285ZM580 1000L600 1000 600 1025 582 1015Z" />
    <path fill="#ac84e6" d="M752 1030L765 1055 775 1060 778 1082 765 1085 760 1065 750 1055Z" />
    <path fill="#c8bfd6" d="M698 1175L722 1168 730 1185 755 1195 772 1215 774 1240 742 1242 735 1255 708 1256 696 1225Z" />
    <path fill="none" stroke="#fff" strokeWidth="3" strokeDasharray="4 7" d="M664 1410L654 1480 668 1525 700 1548" />
    <path fill="none" stroke="#8049cc" strokeWidth="2" d="M310 492l30-18 25 8-20 18zM370 555l15-12 30 0-20 12zM492 655l10 15 5 20" />
    <path fill="#6b47a8" d="M540 1099h5v4h-5zM556 1102h3v3h-3zM408 965h3v3h-3zM748 985h3v12h-3zM1008 985h4v8h-4zM988 1585h3v3h-3zM988 1603h3v3h-3zM72 1228h3v3h-3zM72 1246h3v3h-3zM142 1219h3v3h-3zM288 1270h3v3h-3zM1132 1207h3v3h-3zM630 905h3v12h-3zM680 945h3v6h-3z" />
  </g>
);

const MiniWorld = () => (
  <svg width="104" height="57" viewBox="-1140 370 2470 1530" preserveAspectRatio="none">
    <g fill="#929292">
      <path d={LAND.eurasia} /><path d={LAND.scandinavia} /><path d={LAND.africa} /><path d={LAND.madagascar} /><path d={LAND.britain} /><path d={LAND.islands} />
    </g>
    <path fill="#fff" d="M230 1060L212 1112 300 1114 285 1070ZM343 1078L382 1062 388 1150 355 1120Z" />
    <path fill="#bdbdbd" d={LAND.australia} /><path fill="#bdbdbd" d={LAND.zealand} />
    <g fill="#bdbdbd" transform="translate(-1152 330)">
      <path d={LAND.america} /><path d={LAND.arctic} /><path d={LAND.iceland} /><path d={LAND.greenland} /><path d={LAND.antilles} />
    </g>
  </svg>
);

const Relations = () => (
  <svg width="279" height="140" viewBox="0 0 279 140">
    <g fill="#b07ee8">
      <circle cx="56" cy="30" r="13" /><circle cx="110" cy="24" r="13" /><circle cx="86" cy="62" r="13" /><circle cx="44" cy="77" r="13" /><circle cx="129" cy="77" r="13" /><circle cx="86" cy="104" r="13" />
    </g>
    <g fill="none" stroke="#b07ee8">
      <path strokeWidth="5" d="M62 36Q76 44 82 57M106 30Q92 42 91 56M96 63Q112 60 122 73" />
      <path strokeWidth="3" d="M87 71Q91 83 88 97" />
      <path strokeWidth="1.500" d="M50 71Q62 61 76 63" />
      <path strokeWidth="3" d="M168.500 3.500h78v31h-78zM168.500 49.500h78v31h-78zM168.500 94.500h78v31h-78z" />
    </g>
  </svg>
);

const swatches = ['#e6d8ff', '#c8a3fe', '#a66efd', '#8547dd', '#6826c0', '#4c1b8e', '#31135e'];

const slots = [
  { icon: 'place', title: 'Locations', required: true, field: 'country', drop: true },
  { icon: 'swatches', title: 'Location color', field: 'goal_14_score', drop: true },
  { icon: 'hash', title: 'Location extrusion height', field: 'goal_15_score' },
  { icon: 'abc', title: 'Label', drop: true },
  { icon: 'hash', title: 'Tooltip' },
];

const tools = [['pin', 'Pin'], ['bolt', 'Actions'], ['crop', 'Select area'], ['chart', 'Forecast'], ['trash', 'Delete']];

function Browser() {
  return (
    <>
      <TabStrip>
        <TabSearch aria-label="Search tabs"><ChevronDown size={16} strokeWidth={3} /></TabSearch>
        {tabs.map(([Fav, title, kind], i) => (
          <Tab key={i} $active={kind === 'active'} $plain={kind === 'plain'}>
            <Fav />
            <TabTitle>{title}</TabTitle>
            <TabClose aria-label="Close tab"><X size={16} strokeWidth={2.5} /></TabClose>
          </Tab>
        ))}
        <NewTab aria-label="New tab"><Plus size={18} strokeWidth={2.5} /></NewTab>
        <WindowButtons>
          <WindowButton aria-label="Minimize"><Glyph $size={14}><path d="M1 16h30" /></Glyph></WindowButton>
          <WindowButton aria-label="Restore"><Glyph $size={14} $w={2.5}><rect x="2" y="6" width="24" height="24" rx="5" /><path d="M8 2h16q6 0 6 6v16" /></Glyph></WindowButton>
          <WindowButton aria-label="Close"><Glyph $size={14} $w={2.5}><path d="M2 2l28 28M30 2L2 30" /></Glyph></WindowButton>
        </WindowButtons>
      </TabStrip>
      <AddressRow>
        <NavButton aria-label="Back"><ArrowLeft size={21} /></NavButton>
        <NavButton aria-label="Forward" $off><ArrowRight size={21} /></NavButton>
        <NavButton aria-label="Reload"><RotateCw size={19} strokeWidth={2.5} /></NavButton>
        <AddressBox>
          <SiteInfo><Glyph $size={18} $w={4}><circle cx="8" cy="8" r="5" /><path d="M17 8h13M2 24h13" /><circle cx="24" cy="24" r="5" /></Glyph></SiteInfo>
          <Address aria-label="Address" defaultValue="https://us3.ca.analytics.ibm.com/bi/?perspective=explore&id=iBD5C56901C234FF9806489A79DABF232&objRef=iBD5C56901C234FF9806489A79DABF232&options%5Bdisable..." />
          <Star size={20} color="#5d5053" />
        </AddressBox>
        <NavButton aria-label="Extensions"><Glyph $size={24} $w={3}><path d="M4 8h8V6a3 3 0 0 1 6 0v2h8v8h1a3 3 0 0 1 0 6h-1v8H4v-7q5-1 5-4t-5-4z" /></Glyph></NavButton>
        <Rule />
        <NavButton aria-label="Media"><Glyph $size={22} $w={4}><path d="M2 7h17M2 14h17M2 21h10M25 24V7h6" /><circle cx="22" cy="25" r="3" fill="currentColor" /></Glyph></NavButton>
        <NavButton aria-label="Downloads"><Glyph $size={22} $w={4}><path d="M16 1v19M8 13l8 8 8-8M2 22v8h28v-8" /></Glyph></NavButton>
        <NavButton aria-label="Side panel"><Glyph $size={22} $w={4}><rect x="4" y="4" width="24" height="24" rx="2" /><path strokeWidth="8" d="M23 5v22" /></Glyph></NavButton>
        <NavButton aria-label="Profile"><Portrait><Face /></Portrait></NavButton>
        <NavButton aria-label="Menu"><Glyph $size={20}><g fill="currentColor" stroke="none"><circle cx="16" cy="5" r="3.500" /><circle cx="16" cy="16" r="3.500" /><circle cx="16" cy="27" r="3.500" /></g></Glyph></NavButton>
      </AddressRow>
    </>
  );
}

function AppHeader() {
  return (
    <Header>
      <button aria-label="Open menu"><Glyph $size={20}><path d="M3 6h26M3 12.500h26M3 19h26M3 25.500h26" /></Glyph></button>
      <Brand>IBM <b>Cognos Analytics</b></Brand>
      <Glyph $size={24} $w={1.6} color="#78a9ff">{ICONS.explore}</Glyph>
      <DocTitle>* SDG-Kitty-exploration</DocTitle>
      <button aria-label="Switch document"><Glyph $size={20} $w={3.5}>{ICONS.down}</Glyph></button>
      <HeaderIcons>
        <HeaderButton aria-label="Notifications count"><Count>327</Count></HeaderButton>
        <HeaderButton $light aria-label="Search"><Icon name="search" size={22} w={2.5} /></HeaderButton>
        <HeaderButton aria-label="Assistant"><Icon name="chat" size={25} /></HeaderButton>
        <HeaderButton aria-label="Help"><Icon name="help" size={25} /></HeaderButton>
        <HeaderButton aria-label="Alerts"><Icon name="bell" size={25} /></HeaderButton>
        <HeaderButton aria-label="Account"><User><Icon name="user" size={23} /></User></HeaderButton>
      </HeaderIcons>
    </Header>
  );
}

function ActionBar() {
  return (
    <Toolbar>
      <Tool $w={36} $open aria-label="Save"><Icon name="save" size={18} /></Tool>
      <Tool $w={31} aria-label="Save options"><Icon name="down" size={15} w={3} /></Tool>
      <Tool $w={50} aria-label="Share"><Icon name="share" size={20} w={2.5} /></Tool>
      <Tool $w={50} $open aria-label="Undo"><Icon name="undo" size={19} w={2.5} /></Tool>
      <Tool $w={49} $off aria-label="Redo"><Icon name="redo" size={19} w={2.5} /></Tool>
      <Tool $w={117} $blue $spread>Create <Icon name="plus" size={20} /></Tool>
      <Pager>
        <button aria-label="Previous card"><Icon name="up" size={15} w={3} /></button>
        8/9
        <button aria-label="Next card"><Icon name="down" size={15} w={3} /></button>
      </Pager>
      <Tool $w={98} $label>Map <Icon name="globe" size={20} /></Tool>
      <Tool $w={126} $label>Related <Icon name="related" size={20} /></Tool>
      <Tool $w={136} $label>Compare <Icon name="compare" size={20} /></Tool>
      {tools.map(([name, label]) => (
        <Tool key={name} $w={51} aria-label={label}><Icon name={name} size={20} /></Tool>
      ))}
      <Push>
        <Tool $w={136} $blue $spread>Analytics <Icon name="chart" size={20} /></Tool>
        <Tool $w={119} $blue $spread $open>Details <Icon name="details" size={20} /></Tool>
        <Tool $w={113} $blue $spread $open $on>Fields <Icon name="fields" size={20} /></Tool>
        <Tool $w={145} $blue $spread $open>Properties <Icon name="props" size={20} /></Tool>
      </Push>
    </Toolbar>
  );
}

function Cards() {
  return (
    <CardsPanel>
      <CardsTitle>Cards</CardsTitle>
      <CardsScroll>
        <CardList>
          <CardRow>
            <CardNumber>7</CardNumber>
            <Card aria-label="Card 7">
              <svg width="279" height="190" viewBox="0 0 279 190">
                <path fill="none" stroke="#e3e3e3" d="M32.500 20v136M53.500 20v136M75.500 20v136M96.500 20v136M118.500 20v136M139.500 20v136M160.500 20v136M182.500 20v136M203.500 20v136M225.500 20v136" />
                <path fill="none" stroke="#b8b8b8" d="M22.500 20v136.500h213" />
              </svg>
            </Card>
          </CardRow>
          <CardRow>
            <CardNumber>8</CardNumber>
            <Card $on>
              <CardName>goal_14_score ...ountry regions</CardName>
              <Tick><svg width="16" height="16" viewBox="0 0 16 16"><circle cx="8" cy="8" r="8" fill="#2b2b2b" /><path d="M4 8l3 3 5-5" fill="none" stroke="#fff" strokeWidth="1.500" /></svg></Tick>
              <Mini><MiniWorld /></Mini>
            </Card>
          </CardRow>
          <CardRow>
            <CardNumber>9</CardNumber>
            <Card $pad="20px" aria-label="Card 9"><Empty /></Card>
          </CardRow>
        </CardList>
        <Track>
          <Arrow />
          <Rest $n={346} />
          <Rest $n={128} $thumb />
          <Arrow $down $dim />
        </Track>
      </CardsScroll>
      <RelationWrap>
        <Card>
          <CardName>Data relationships</CardName>
          <Relations />
        </Card>
      </RelationWrap>
    </CardsPanel>
  );
}

function Visualization() {
  return (
    <Canvas>
      <Viz>
        <VizHead>
          <VizTitle>goal_14_score and goal_15_score for country regions</VizTitle>
          <svg width="18" height="18" viewBox="0 0 18 18"><circle cx="9" cy="9" r="9" fill="#c8a11a" /><path d="M9 4v6M9 12v2" stroke="#fff" strokeWidth="2" /></svg>
        </VizHead>
        <Legends>
          <Legend>
            <LegendName>goal_14_score (A...</LegendName>
            <Ramp>{swatches.map((c) => <Swatch key={c} $c={c} />)}</Ramp>
            <Ends><span>0</span><span>89.11</span></Ends>
          </Legend>
          <Legend>
            <LegendName>goal_15_score (A...</LegendName>
            <svg width="137" height="22" viewBox="0 0 137 22"><path d="M5 11L126 0v22H5z" fill="#dfdfdf" /><circle cx="6" cy="17" r="5.500" fill="#8d8d8d" /><circle cx="125.500" cy="11" r="11" fill="#8d8d8d" /></svg>
            <Ends><span>26.46</span><span>94.96</span></Ends>
          </Legend>
        </Legends>
        <WorldMap viewBox="506 375 923 565" preserveAspectRatio="xMidYMid slice" role="img" aria-label="World map">
          <defs>
            <filter id="coast" x="0" y="0" width="1" height="1">
              <feTurbulence type="fractalNoise" baseFrequency="0.120" numOctaves="3" seed="4" result="n" />
              <feDisplacementMap in="SourceGraphic" in2="n" scale="5" xChannelSelector="R" yChannelSelector="G" />
            </filter>
          </defs>
          <g filter="url(#coast)">
            <g transform="translate(490 250) scale(0.333)">
              <OldWorld />
              <use href="#old-world" x="2475" />
            </g>
            <g transform="translate(930 360) scale(0.333)"><NewWorld /></g>
          </g>
        </WorldMap>
        <MapTools>
          <MapTool $line aria-label="Layers"><Icon name="layers" size={20} /></MapTool>
          <MapTool aria-label="Zoom in"><Icon name="zoomIn" size={20} /></MapTool>
          <MapTool aria-label="Zoom out"><Icon name="zoomOut" size={20} /></MapTool>
          <MapTool $line aria-label="Reset"><Icon name="reset" size={20} /></MapTool>
          <MapTool aria-label="Find place"><Icon name="search" size={21} /></MapTool>
        </MapTools>
        <InfoButton aria-label="Map information">
          <svg width="18" height="18" viewBox="0 0 18 18"><circle cx="9" cy="9" r="9" /><path d="M9 3.500v2.500M9 7.500v7" stroke="#fff" strokeWidth="3" /></svg>
        </InfoButton>
      </Viz>
    </Canvas>
  );
}

function Fields() {
  return (
    <FieldsPanel>
      <PanelTitle>Fields</PanelTitle>
      <PanelScroll>
        <PanelBody>
          <Region><Icon name="up" size={15} w={3} />Regions</Region>
          {slots.map((s) => (
            <Slot key={s.title}>
              <SlotHead $bold={s.required}>
                <SlotIcon>{s.icon === 'abc' ? <Abc>abc</Abc> : <Icon name={s.icon} size={20} />}</SlotIcon>
                <span>{s.title}{s.required && <em>*</em>}</span>
                {s.required && <small>Required field</small>}
              </SlotHead>
              {s.field && (
                <Field>
                  <Glyph viewBox="0 0 10 16" $size={14}><g fill="#2b2b2b" stroke="none"><path d="M0 1h3v3H0zM6 1h3v3H6zM0 7h3v3H0zM6 7h3v3H6zM0 13h3v3H0zM6 13h3v3H6z" /></g></Glyph>
                  {s.field}
                  <button aria-label={`${s.field} options`}><Glyph viewBox="0 0 10 16" $size={14}><g fill="#2b2b2b" stroke="none"><circle cx="5" cy="2" r="1.500" /><circle cx="5" cy="8" r="1.500" /><circle cx="5" cy="14" r="1.500" /></g></Glyph></button>
                </Field>
              )}
              {s.drop && <Drop>Click or drag data here</Drop>}
            </Slot>
          ))}
        </PanelBody>
        <Track>
          <Arrow $dim />
          <Rest $n={410} $thumb />
          <Rest $n={229} />
          <Arrow $down />
        </Track>
      </PanelScroll>
    </FieldsPanel>
  );
}

function CapturePalette() {
  return (
    <Palette>
      <svg width="33" height="163" viewBox="0 0 33 163">
        <g fill="none" stroke="#fff" strokeWidth="1.500"><circle cx="9" cy="10" r="3.500" /><path d="M5 14q-1-9 9-8M6 15q9 0 8-9" /></g>
        <path d="M19 9h2.500v2.500H19zM23 9h2.500v2.500H23zM27 9h2.500v2.500H27z" fill="#fff" />
        <path d="M4 29h7l2-3h8l2 3h6v15H4z" fill="#fff" /><circle cx="16.500" cy="36.500" r="4.500" fill="#fff" stroke="#1b1b1b" strokeWidth="2" />
        <path d="M4 61h18v5l7-5v16l-7-5v5H4z" fill="#fff" />
        <path d="M4 92h22v3H7v15H4z" fill="#fff" /><path d="M8 95h21v17H8z" fill="#fff" stroke="#1b1b1b" />
        <g fill="none" stroke="#fff"><circle cx="16.500" cy="136.500" r="7" strokeWidth="5" /><circle cx="16.500" cy="136.500" r="10.500" strokeWidth="4" strokeDasharray="5.500 5.500" /></g>
      </svg>
    </Palette>
  );
}

const dockArt = {
  windows: <g><path fill="#5cc8fb" d="M1 1h14.500v14.500H1z" /><path fill="#3db7f7" d="M16.500 1H31v14.500H16.500zM1 16.500h14.500V31H1z" /><path fill="#1d9df0" d="M16.500 16.500H31V31H16.500z" /></g>,
  copilot: <g><path fill="#1b8ce8" d="M8 3q8-5 11 2L12 24H7q-8-2-4-12z" /><path fill="#67c93f" d="M3 14l10-2-3 12q-10 0-7-10z" /><path fill="#d75ad6" d="M19 9h6q6 2 3 10l-3 6H14z" /><rect x="7" y="20" width="24" height="11" rx="2" fill="#ffc81e" /><text x="19" y="29" textAnchor="middle" fontSize="9" fontWeight="700" fill="#222">PRE</text></g>,
  views: <g><path fill="#eaeaea" d="M10 2h20v20H10z" /><path fill="#7b7b7b" d="M2 9h21v21H2z" opacity=".85" /></g>,
  chat: <g><path fill="#6f63c8" d="M16 3a13 13 0 1 1-5 25l-8 3 1-9A13 13 0 0 1 16 3z" /><rect x="8" y="11" width="12" height="10" rx="2" fill="#fff" /><path fill="#fff" d="M21 14l4-2v8l-4-2z" /></g>,
  r: <g><circle cx="16" cy="16" r="15" fill="#75aadb" /><text x="16" y="22" textAnchor="middle" fontSize="18" fontFamily="Liberation Serif" fill="#fff">R</text></g>,
  python: <g><path fill="#f4f4f4" d="M2 3h26v22H2z" /><path fill="#2272c3" d="M2 3h26v3H2z" /><path stroke="#aaa" d="M5 10h10M5 14h7M5 18h6" /><path fill="#3a77aa" d="M17 12h8q3 0 3 4v3h-9q-3 0-3 4h-3v-5q0-3 4-3h6v-1h-6z" /><path fill="#ffd849" d="M27 31h-8q-3 0-3-4v-3h9q3 0 3-4h3v5q0 4-4 4h-5v1z" /></g>,
  paint: <g><path fill="#41a5e8" d="M19 1q9 2 10 12-1 3-3 4-5 0-6 5 0 6-5 8Q2 28 3 16 6 3 19 1z" /><circle cx="12" cy="9" r="3" fill="#f2c530" /><circle cx="20" cy="6" r="3" fill="#54c063" /><circle cx="8" cy="16" r="3" fill="#e4572e" /><circle cx="11" cy="24" r="3" fill="#0f5ea8" /><path fill="#d08a3c" d="M23 18h4l-1 13h-2z" /><path fill="#f0c98a" d="M22 11h6v7h-6z" /></g>,
  edge: <g><circle cx="16" cy="16" r="15" fill="#1683d3" /><path fill="#4fd3a0" d="M4 9Q14-4 26 5q7 6 4 14-4 5-11 2 3-9-4-11-6-1-11 4z" /><path fill="#0d57a6" d="M3 14q6-6 11-2-5 4-3 10 4 8 15 5-8 8-17 2-8-6-6-15z" /></g>,
  folder: <g><path fill="#e9a400" d="M1 4h11l3 4H1z" /><path fill="#ffcd47" d="M1 8h30v21H1z" /><path fill="#0f74c9" d="M8 22h17v7H8z" /></g>,
  chrome: <g><circle cx="16" cy="16" r="15" fill="#fbc116" /><path fill="#e33b2e" d="M16 1a15 15 0 0 1 13 7.500H16a7.500 7.500 0 0 0-6.500 11L3 8.500A15 15 0 0 1 16 1z" /><path fill="#2da94f" d="M3 8.500l6.500 11.250A7.500 7.500 0 0 0 16 23.500L13 31A15 15 0 0 1 3 8.500z" /><circle cx="16" cy="16" r="6.500" fill="#fff" /><circle cx="16" cy="16" r="5.200" fill="#1a73e8" /></g>,
};
const Badge = styled.span`
  ${Center}
  position: absolute;
  top: 4px;
  right: 4px;
  width: 20px;
  height: 20px;
  border-radius: 50%;
  background: ${(p) => p.$c};
  color: ${(p) => p.$t};
  font-size: 13px;
`;
const DockPortrait = styled.span`
  position: absolute;
  top: 4px;
  right: 3px;
  width: 20px;
  height: 20px;
  border-radius: 50%;
  overflow: hidden;
  svg { width: 20px; height: 20px; }
`;
const WeatherArt = styled.span`
  position: relative;
  width: 34px;
  height: 40px;
  ${Badge} { top: -2px; right: 0; }
`;
const DockApp = ({ art, label, ...rest }) => (
  <DockButton aria-label={label} {...rest}>
    <Glyph $size={31}><g stroke="none">{dockArt[art]}</g></Glyph>
    {art === 'chat' && <Badge $c="#4cc2ff" $t="#111">1</Badge>}
    {art === 'chrome' && <DockPortrait><Face /></DockPortrait>}
  </DockButton>
);

function WindowsBar() {
  return (
    <Taskbar>
      <Weather>
        <WeatherArt>
          <svg width="34" height="40" viewBox="0 0 34 40"><path d="M3 26q9 3 17-8 10 2 7 12-6 8-15 5-7-3-9-9z" fill="#f09a1c" /><path d="M4 20q-5-4 0-8 4-8 11-2 7 1 5 9z" fill="#a9c7f2" /><path d="M16 35q-5-3 0-7 4-7 11-1 6 1 5 8z" fill="#bcd3f7" /></svg>
          <Badge $c="#c42b1c" $t="#fff">1</Badge>
        </WeatherArt>
        <div><p>16°C</p><p>Partly cloudy</p></div>
      </Weather>
      <Dock>
        <DockApp art="windows" label="Start" />
        <DockSearch>
          <Glyph $size={20} $w={3}>{ICONS.search}</Glyph>
          <input type="search" placeholder="Search" aria-label="Search" />
          <svg width="60" height="30" viewBox="0 0 60 30"><path d="M0 13q8-8 14-9 4 8 8 9 3-2 5-1 4 1 5 4-8 9-18 10Q8 15 0 13z" fill="#4fa9cb" /><path d="M0 13q8-8 14-9 3 7 7 10-5 4-8 9Q8 15 0 13z" fill="#86cde5" /><circle cx="46" cy="8" r="6" fill="#4da64a" /><circle cx="40" cy="12" r="5" fill="#e2832e" /><circle cx="51" cy="13" r="5" fill="#d4452e" /><circle cx="46" cy="12" r="4" fill="#f0b23c" /><path d="M34 15h24q-2 13-12 13T34 15z" fill="#b9765a" /></svg>
        </DockSearch>
        <DockApp art="copilot" label="Copilot" />
        <DockApp art="views" label="Task view" />
        <DockApp art="chat" label="Chat" />
        <DockApp art="r" label="R" />
        <DockApp art="python" label="Python" />
        <DockApp art="paint" label="Paint" />
        <DockApp art="edge" label="Edge" />
        <DockApp art="folder" label="File Explorer" $bar={7} />
        <DockApp art="chrome" label="Chrome" $on $bar={20} />
      </Dock>
      <Tray>
        <TrayItem $w={36}><ChevronUp size={20} /></TrayItem>
        <TrayItem $w={44}><svg width="22" height="16" viewBox="0 0 22 16"><path d="M3 8q3-9 10-6 6 1 5 6z" fill="#9a9a9a" /><path d="M3 14q-5-3 0-7 4-4 9 0 8-2 9 4 0 3-3 3z" fill="#f2f2f2" /></svg></TrayItem>
        <TrayItem $w={52}>ENG<br />IN</TrayItem>
        <TrayItem $w={42}><Glyph $size={21} $w={2.5}><path d="M2 13q14-13 28 0M6 18q10-9 20 0M10 22q6-5 12 0" /><circle cx="16" cy="26" r="2" fill="currentColor" /></Glyph></TrayItem>
        <TrayItem $w={20}><Glyph $size={21} $w={2.5}><path d="M3 12h5l7-6v20l-7-6H3zM19 12q3 4 0 8M23 9q5 7 0 14" /><path opacity=".4" d="M27 6q7 10 0 20" /></Glyph></TrayItem>
        <TrayItem $w={38}><Glyph $size={22} $w={2.5}><path d="M12 8h15v18H5V14M27 13h4v7h-4M7 1L3 9h5l-3 6" /><path fill="currentColor" d="M9 18l14-6v10H9z" /></Glyph></TrayItem>
        <Clock>20:32<br />06-01-2024</Clock>
        <Bell size={23} color="#8be4ff" fill="#8be4ff" />
      </Tray>
    </Taskbar>
  );
}

export default function App() {
  return (
    <Shell>
      <GlobalStyle />
      <Browser />
      <AppHeader />
      <ActionBar />
      <Workspace>
        <Rail>
          <RailButton $on aria-label="Explore"><Icon name="explore" size={24} /></RailButton>
          <RailButton aria-label="Data tree"><Icon name="tree" size={24} /></RailButton>
          <RailButton aria-label="Pins"><Icon name="pin" size={24} /></RailButton>
        </Rail>
        <Cards />
        <Splitter />
        <Stage>
          <Columns>
            <Visualization />
            <Fields />
          </Columns>
          <BottomBar />
        </Stage>
      </Workspace>
      <CapturePalette />
      <WindowsBar />
    </Shell>
  );
}
